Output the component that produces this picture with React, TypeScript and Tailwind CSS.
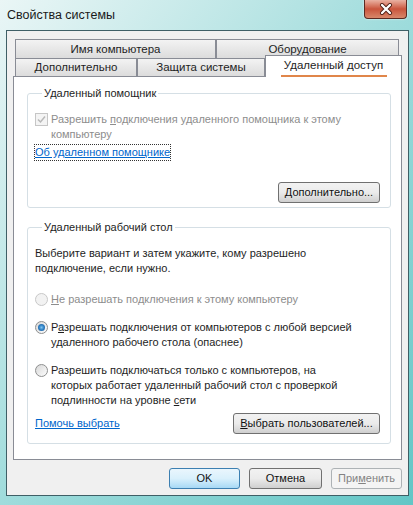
import React from "react";

const font = { fontFamily: '"Liberation Sans", Arial, sans-serif' };

function Tab({ label, w, selected }: { label: string; w: string; selected?: boolean }) {
  if (selected) {
    return (
      <div
        className={`${w} relative z-10 -mt-[3px] -mb-px flex h-[22px] flex-col items-center border border-b-0 border-[#898c95] bg-white pt-[2px]`}
      >
        <span className="text-[11.5px]">{label}</span>
        <div className="mt-[2px] h-[2px] w-[106px] bg-[#e0864a]" />
      </div>
    );
  }
  return (
    <div
      className={`${w} flex h-full items-center justify-center border border-b-0 border-[#898c95] bg-linear-to-b from-[#f3f3f3] to-[#dcdcdc] text-[11.5px]`}
    >
      {label}
    </div>
  );
}

function Button({
  children,
  w,
  variant = "normal",
}: {
  children: React.ReactNode;
  w: string;
  variant?: "normal" | "default" | "disabled";
}) {
  const look =
    variant === "default"
      ? "border-[#3c7fb1] bg-linear-to-b from-[#eaf6fd] via-[#d9f0fc] to-[#a7d9f5] text-[#111]"
      : variant === "disabled"
        ? "border-[#adb2b5] bg-[#f4f4f4] text-[#838383]"
        : "border-[#707070] bg-linear-to-b from-[#f2f2f2] via-[#ebebeb] to-[#cfcfcf] text-[#111]";
  return (
    <div
      className={`${w} flex h-[21px] items-center justify-center rounded-[3px] border ${look}`}
    >
      {children}
    </div>
  );
}

function Radio({ state }: { state: "disabled" | "checked" | "off" }) {
  return (
    <div
      className={`mt-[1px] flex h-[13px] w-[13px] shrink-0 items-center justify-center rounded-full border ${
        state === "disabled" ? "border-[#c8c8c8] bg-[#f2f2f2]" : "border-[#8e8f8f] bg-linear-to-br from-[#d8d8d8] to-[#fdfdfd]"
      }`}
    >
      {state === "checked" && (
        <div className="h-[7px] w-[7px] rounded-full bg-radial from-[#7ec4ef] via-[#2c7fc4] to-[#1b4f8a]" />
      )}
    </div>
  );
}

export default function App() {
  return (
    <div
      style={font}
      className="flex h-[505px] w-[413px] flex-col overflow-hidden bg-linear-to-br from-[#eaf6f6] via-[#9fdcdc] to-[#62c6c6] text-[11px] leading-[15px] text-[#1e1e1e]"
    >
      {/* title bar */}
      <div className="flex h-[30px] shrink-0 items-start justify-between">
        <div className="pl-[7px] pt-[8px] text-[12.5px] text-[#1a1a1a]">Свойства системы</div>
        <div className="mr-[6px] flex h-[19px] w-[43px] items-center justify-center rounded-b-[4px] border border-t-0 border-[#5b2a22] bg-linear-to-b from-[#e9b1a2] via-[#c9543c] to-[#d8876a] shadow-[0_0_2px_#fff]">
          <svg width="14" height="12" viewBox="0 0 14 12">
            <path d="M3 2 L11 10 M11 2 L3 10" stroke="#4a1b12" strokeWidth="4" strokeLinecap="round" />
            <path d="M3 2 L11 10 M11 2 L3 10" stroke="#fff" strokeWidth="2.4" strokeLinecap="round" />
          </svg>
        </div>
      </div>

      {/* client area */}
      <div className="ml-[6px] flex h-[466px] w-[403px] flex-col border border-[#3f5f66] bg-[#f0f0f0] px-[6px] pt-[8px]">
        {/* tabs */}
        <div className="ml-[2px] flex flex-col">
          <div className="flex h-[19px]">
            <Tab label="Имя компьютера" w="w-[201px]" />
            <Tab label="Оборудование" w="w-[183px]" />
          </div>
          <div className="flex h-[18px] items-end">
            <Tab label="Дополнительно" w="w-[122px]" />
            <Tab label="Защита системы" w="w-[128px]" />
            <Tab label="Удаленный доступ" w="w-[137px]" selected />
          </div>
        </div>

        {/* panel */}
        <div className="flex h-[384px] flex-col border border-[#898c95] bg-white pl-[13px] pr-[10px] pt-[9px]">
          <fieldset className="rounded-[3px] border border-[#d5dfe5] pb-[4px] pl-[7px] pr-[10px]">
            <legend className="ml-[7px] px-[2px]">Удаленный помощник</legend>
            <div className="mt-[11px] flex gap-[3px] text-[#8d8d8d]">
              <div className="mt-[1px] flex h-[13px] w-[13px] shrink-0 items-center justify-center border border-[#c6c6c6] bg-[#f4f4f4]">
                <svg width="9" height="9" viewBox="0 0 9 9">
                  <path d="M1 4.5 L3.5 7 L8 1.5" stroke="#b8b8b8" strokeWidth="1.5" fill="none" />
                </svg>
              </div>
              <div>
                Разрешить <span className="underline">п</span>одключения удаленного помощника к этому
                <br />
                компьютеру
              </div>
            </div>
            <div className="mt-[3px] flex">
              <span className="text-[#0066cc] underline outline outline-1 outline-dotted outline-[#333]">
                Об удаленном помощнике
              </span>
            </div>
            <div className="mt-[22px] flex justify-end">
              <Button w="w-[102px]">
                <span>
                  <span className="underline">Д</span>ополнительно...
                </span>
              </Button>
            </div>
          </fieldset>

          <fieldset className="mt-[12px] rounded-[3px] border border-[#d5dfe5] pb-[9px] pl-[7px] pr-[10px]">
            <legend className="ml-[7px] px-[2px]">Удаленный рабочий стол</legend>
            <div className="mt-[11px]">
              Выберите вариант и затем укажите, кому разрешено
              <br />
              подключение, если нужно.
            </div>
            <div className="mt-[16px] flex gap-[3px] text-[#8d8d8d]">
              <Radio state="disabled" />
              <div>
                <span className="underline">Н</span>е разрешать подключения к этому компьютеру
              </div>
            </div>
            <div className="mt-[13px] flex gap-[3px]">
              <Radio state="checked" />
              <div>
                Р<span className="underline">а</span>зрешать подключения от компьютеров с любой версией
                <br />
                удаленного рабочего стола (опаснее)
              </div>
            </div>
            <div className="mt-[13px] flex gap-[3px]">
              <Radio state="off" />
              <div>
                Разрешить подключаться только с компьютеров, на
                <br />
                которых работает удаленный рабочий стол с проверкой
                <br />
                подлинности на уровне <span className="underline">с</span>ети
              </div>
            </div>
            <div className="mt-[5px] flex items-center justify-between">
              <span className="text-[#0066cc] underline">Помочь выбрать</span>
              <Button w="w-[147px]">
                <span>
                  <span className="underline">В</span>ыбрать пользователей...
                </span>
              </Button>
            </div>
          </fieldset>
        </div>

        {/* dialog buttons */}
        <div className="mt-[8px] flex justify-end gap-[9px]">
          <Button w="w-[71px]" variant="default">
            OK
          </Button>
          <Button w="w-[73px]">Отмена</Button>
          <Button w="w-[71px]" variant="disabled">
            <span>
              При<span className="underline">м</span>енить
            </span>
          </Button>
        </div>
      </div>
    </div>
  );
}
